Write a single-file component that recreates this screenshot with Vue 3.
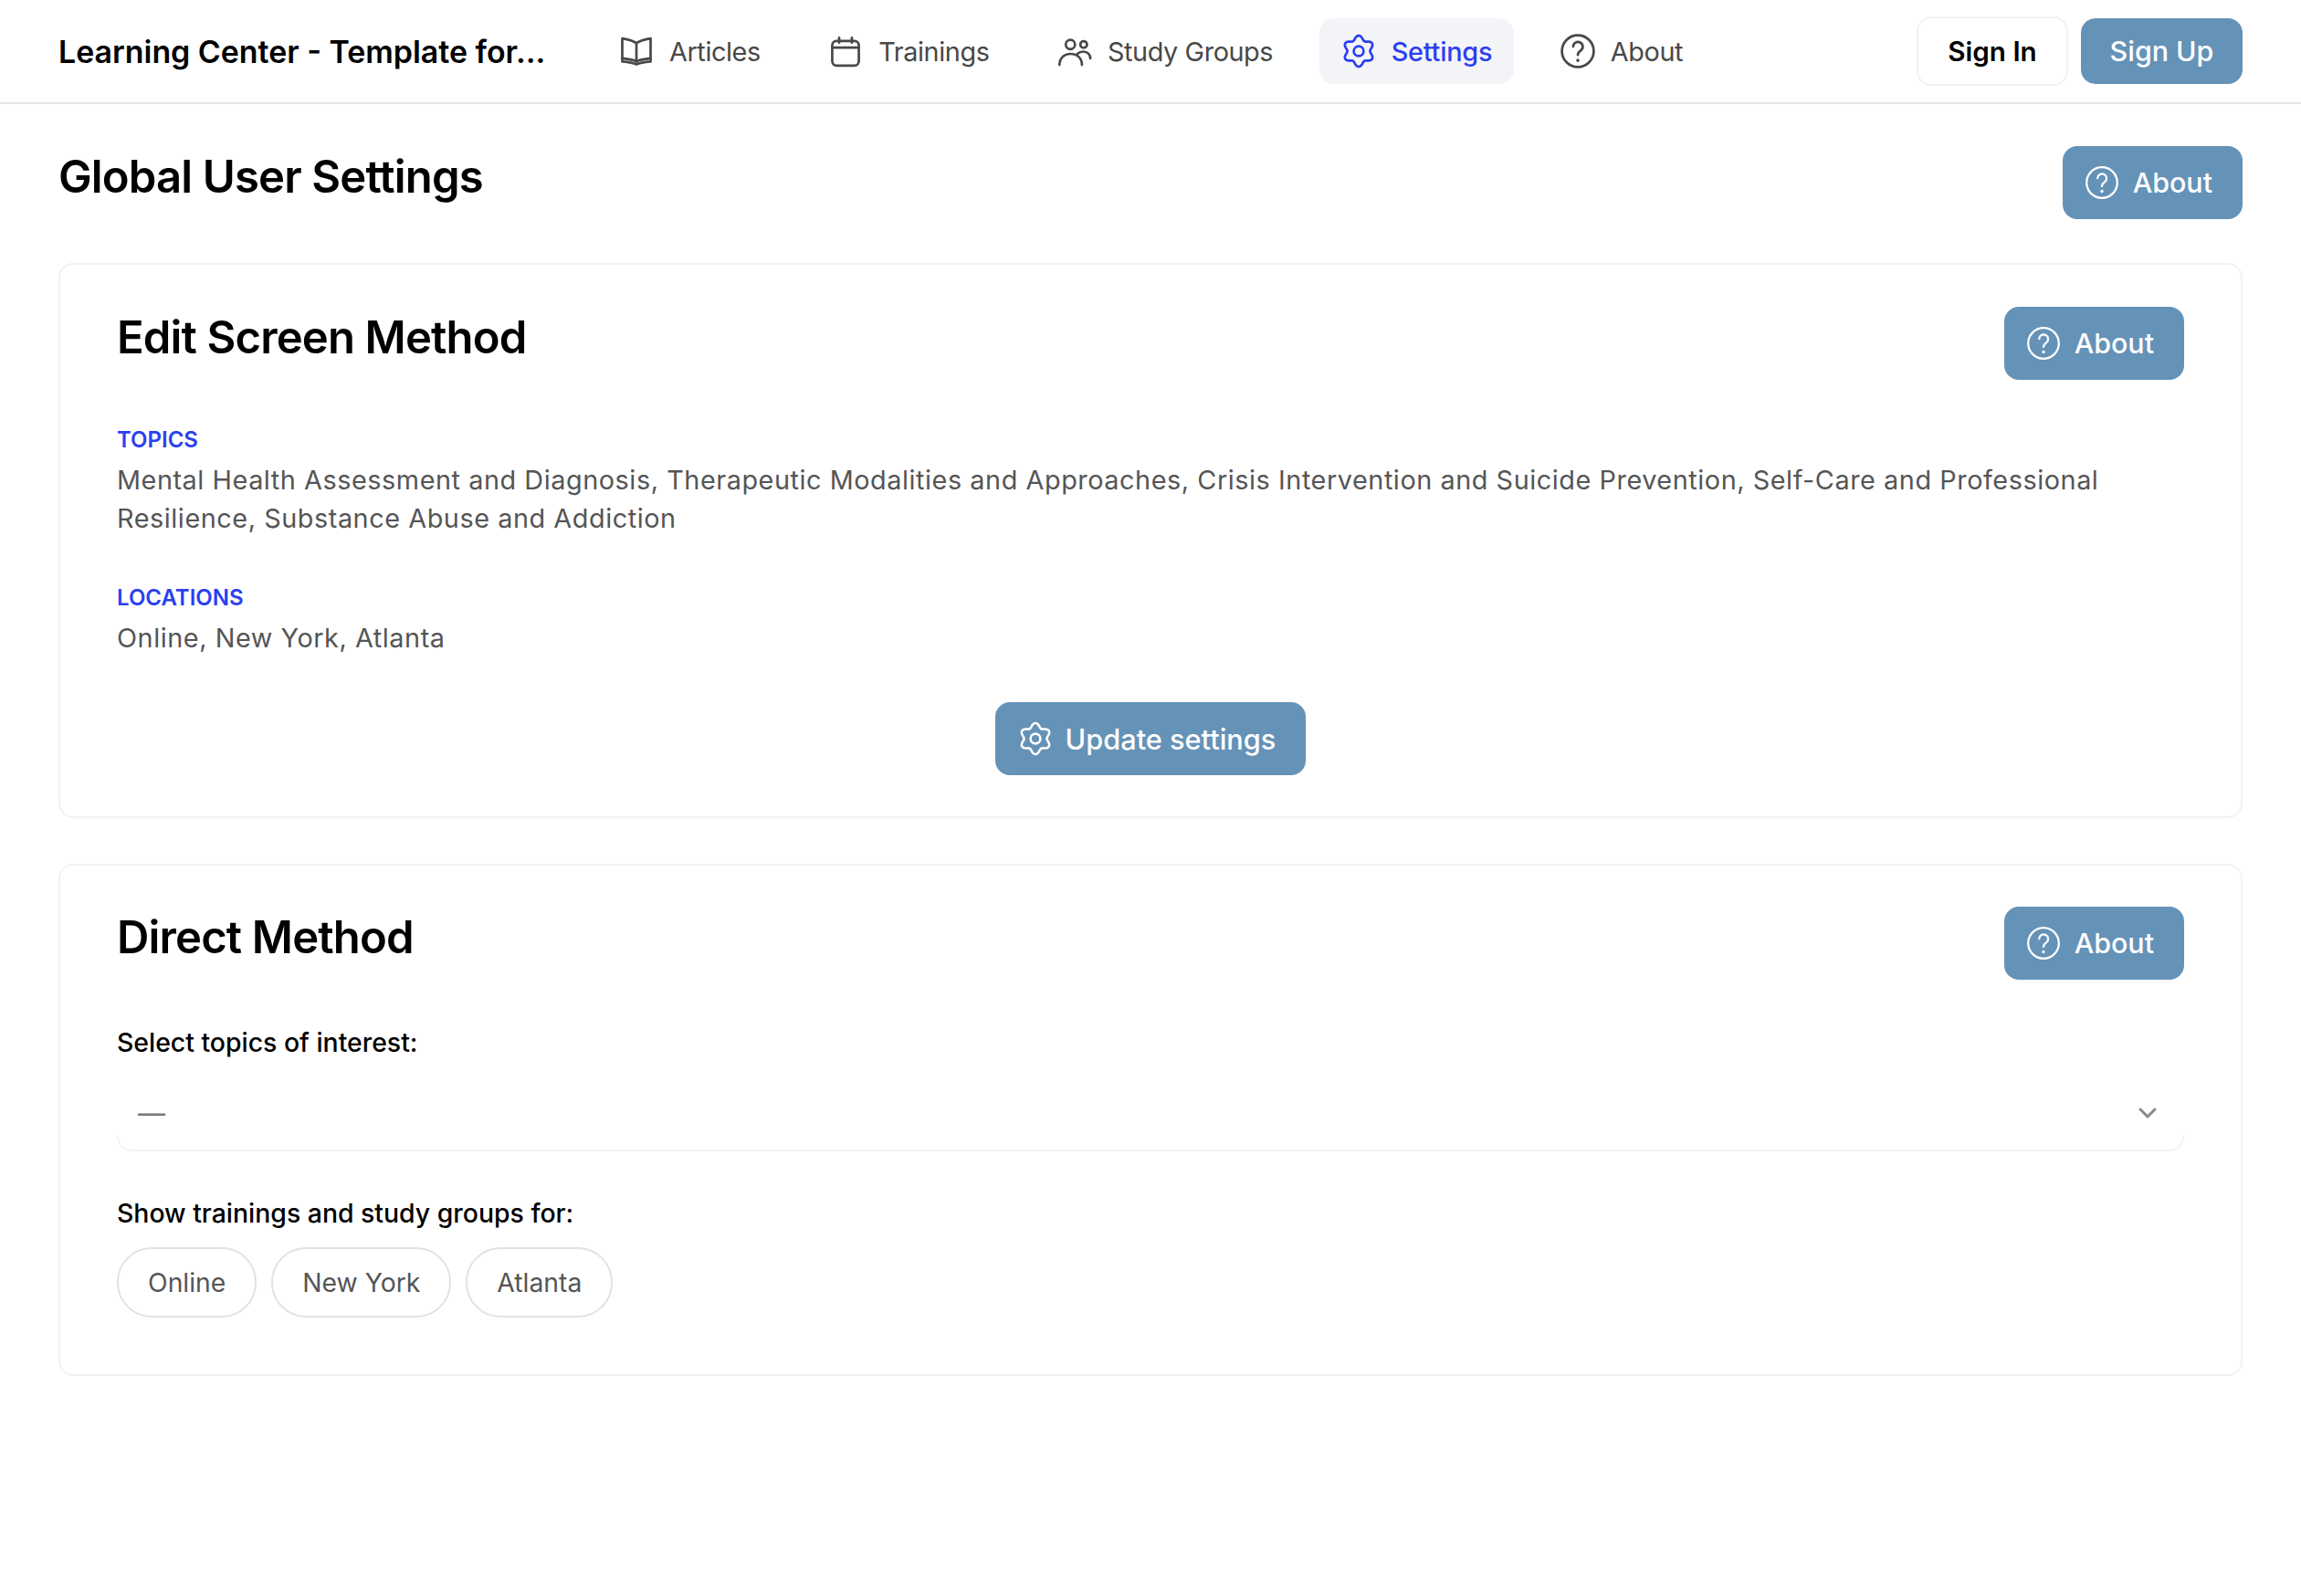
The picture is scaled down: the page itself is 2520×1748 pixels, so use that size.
<script setup>
const navItems = [
  { label: 'Articles', icon: 'book' },
  { label: 'Trainings', icon: 'calendar' },
  { label: 'Study Groups', icon: 'users' },
  { label: 'Settings', icon: 'gear', active: true },
  { label: 'About', icon: 'help' },
]
const chips = ['Online', 'New York', 'Atlanta']

// Six-lobed cog outline, sampled in polar form around the icon's centre.
const gear = (() => {
  const points = []
  for (let i = 0; i < 144; i++) {
    const a = (i / 144) * Math.PI * 2
    const r = 9.3 + 1.45 * Math.cos(6 * a)
    points.push(`${(12 + r * Math.sin(a)).toFixed(2)} ${(12 - r * Math.cos(a)).toFixed(2)}`)
  }
  return `M${points.join('L')}Z`
})()
</script>

<template>
  <div class="page">
    <header class="topbar">
      <div class="brand">Learning Center - Template for...</div>
      <nav class="nav">
        <a v-for="item in navItems" :key="item.label" class="nav-item" :class="{ active: item.active }">
          <svg class="nav-icon" viewBox="0 0 24 24" fill="none" stroke="currentColor" stroke-width="1.7" stroke-linecap="round" stroke-linejoin="round">
            <template v-if="item.icon === 'book'">
              <path d="M12 6.4C10 5 7 4 2.200 3.200V17c4.800.5 7.800 1 9.800 2.200 2-1.200 5-1.700 9.800-2.200V3.200C17 4 14 5 12 6.400Z" />
              <path d="M12 6.400v12.800" />
              <path d="M2.200 17v2.200c4.800.4 7.800 1 9.800 2 2-1 5-1.600 9.800-2V17" />
            </template>
            <template v-else-if="item.icon === 'calendar'">
              <rect x="2.800" y="5" width="18.400" height="17" rx="3" />
              <path d="M2.800 9.600h18.400M7.600 2.800v3.400M16.400 2.800v3.400" />
            </template>
            <template v-else-if="item.icon === 'users'">
              <circle cx="9" cy="7.400" r="3.200" />
              <circle cx="18.200" cy="7.400" r="2.300" />
              <path d="M1.500 21.500C1.500 17 4.500 13.900 9.200 13.900S17 17 17 21.500" />
              <path d="M13.800 13.900C15 12.800 16.500 12.300 18 12.300c2.800 0 4.800 2 4.800 4.700" />
            </template>
            <template v-else-if="item.icon === 'gear'">
              <path :d="gear" />
              <circle cx="12" cy="12" r="3.400" />
            </template>
            <template v-else>
              <circle cx="12" cy="12" r="11" />
              <path d="M8.800 8.800a3.300 3.300 0 1 1 5.200 2.800c-1.200.8-2 1.500-2 3.100" />
              <path d="M12 18.300v.1" stroke-width="2.200" />
            </template>
          </svg>
          <span>{{ item.label }}</span>
        </a>
      </nav>
      <div class="auth">
        <button class="btn-outline">Sign In</button>
        <button class="btn-solid btn-short">Sign Up</button>
      </div>
    </header>

    <main class="content">
      <div class="title-row">
        <h1 class="page-title">Global User Settings</h1>
        <button class="btn-solid btn-icon">
          <svg class="btn-svg" viewBox="0 0 24 24" fill="none" stroke="currentColor" stroke-width="1.500" stroke-linecap="round" stroke-linejoin="round">
            <circle cx="12" cy="12" r="11.200" />
            <path d="M8.800 8.800a3.300 3.300 0 1 1 5.200 2.800c-1.200.8-2 1.500-2 3.100" />
            <path d="M12 18.300v.1" stroke-width="2.200" />
          </svg>
          About
        </button>
      </div>

      <section class="card card-edit">
        <div class="card-head">
          <h2 class="card-title">Edit Screen Method</h2>
          <button class="btn-solid btn-icon">
            <svg class="btn-svg" viewBox="0 0 24 24" fill="none" stroke="currentColor" stroke-width="1.500" stroke-linecap="round" stroke-linejoin="round">
              <circle cx="12" cy="12" r="11.200" />
              <path d="M8.800 8.800a3.300 3.300 0 1 1 5.200 2.800c-1.200.8-2 1.500-2 3.100" />
              <path d="M12 18.300v.1" stroke-width="2.200" />
            </svg>
            About
          </button>
        </div>
        <div class="eyebrow eyebrow-topics">Topics</div>
        <p class="body-text">Mental Health Assessment and Diagnosis, Therapeutic Modalities and Approaches, Crisis Intervention and Suicide Prevention, Self-Care and Professional Resilience, Substance Abuse and Addiction</p>
        <div class="eyebrow eyebrow-locations">Locations</div>
        <p class="body-text">Online, New York, Atlanta</p>
        <div class="center-row">
          <button class="btn-solid btn-icon btn-update">
            <svg class="gear-svg" viewBox="0 0 24 24" fill="none" stroke="currentColor" stroke-width="1.600" stroke-linecap="round" stroke-linejoin="round">
              <path :d="gear" />
              <circle cx="12" cy="12" r="3.400" />
            </svg>
            Update settings
          </button>
        </div>
      </section>

      <section class="card card-direct">
        <div class="card-head">
          <h2 class="card-title">Direct Method</h2>
          <button class="btn-solid btn-icon">
            <svg class="btn-svg" viewBox="0 0 24 24" fill="none" stroke="currentColor" stroke-width="1.500" stroke-linecap="round" stroke-linejoin="round">
              <circle cx="12" cy="12" r="11.200" />
              <path d="M8.800 8.800a3.300 3.300 0 1 1 5.200 2.800c-1.200.8-2 1.500-2 3.100" />
              <path d="M12 18.300v.1" stroke-width="2.200" />
            </svg>
            About
          </button>
        </div>
        <label class="field-label label-topics">Select topics of interest:</label>
        <div class="select">
          <span class="select-value">—</span>
          <svg class="chevron" viewBox="0 0 20 12" fill="none" stroke="currentColor" stroke-width="3" stroke-linecap="round" stroke-linejoin="round">
            <path d="M2 2l8 8 8-8" />
          </svg>
        </div>
        <label class="field-label label-show">Show trainings and study groups for:</label>
        <div class="chips">
          <span v-for="chip in chips" :key="chip" class="chip">{{ chip }}</span>
        </div>
      </section>
    </main>
  </div>
</template>

<style>
html, body { margin: 0; background: #fff; }
</style>

<style scoped>
.page {
  min-height: 1748px;
  font-family: Inter, "Liberation Sans", sans-serif;
  color: #000;
  background: #fff;
}
.topbar {
  display: flex;
  align-items: center;
  height: 112px;
  padding: 0 64px;
  border-bottom: 2px solid #e3e4e8;
}
.brand {
  width: 532px;
  font-size: 33.9px;
  font-weight: 600;
  white-space: nowrap;
  flex: none;
}
.nav {
  display: flex;
  gap: 26.5px;
  margin-left: 58px;
  flex: 1;
}
.nav-item {
  display: flex;
  align-items: center;
  gap: 17px;
  height: 72px;
  padding: 0 24px;
  border-radius: 16px;
  font-size: 28.8px;
  letter-spacing: -0.4px;
  color: #484848;
  white-space: nowrap;
}
.nav-item.active {
  background: #f3f4f8;
  color: #2b3ff0;
  font-weight: 500;
  letter-spacing: -0.2px;
}
.nav-icon { width: 38px; height: 38px; flex: none; }
.auth { display: flex; align-items: center; gap: 14px; }
button {
  font-family: inherit;
  cursor: pointer;
}
.btn-outline {
  width: 166px;
  height: 76px;
  background: #fff;
  border: 2px solid #f2f2f4;
  border-radius: 16px;
  font-size: 29.6px;
  font-weight: 600;
  color: #000;
}
.btn-solid {
  background: #6592b7;
  color: #fff;
  border: 0;
  border-radius: 16px;
  font-weight: 500;
  font-size: 30.4px;
}
.btn-short {
  width: 177px;
  height: 72px;
}
.btn-icon {
  display: inline-flex;
  align-items: center;
  gap: 16px;
  height: 80px;
  padding: 0 33px 0 25px;
  white-space: nowrap;
}
.btn-update { padding: 0 33px 0 25px; gap: 14px; font-size: 30.7px; }
.btn-svg { width: 36px; height: 36px; flex: none; }
.gear-svg { width: 38px; height: 38px; flex: none; }
.content { padding: 46px 64px 0; }
.title-row {
  display: flex;
  justify-content: space-between;
  align-items: flex-start;
}
.page-title {
  margin: 0;
  padding-top: 4px;
  font-size: 49px;
  letter-spacing: -0.85px;
  font-weight: 600;
  line-height: 60px;
}
.card {
  border: 2px solid #f2f2f4;
  border-radius: 16px;
  padding: 46px 62px;
  box-sizing: border-box;
}
.card-edit { margin-top: 48px; height: 608px; }
.card-direct { margin-top: 50px; height: 561px; padding-top: 45px; }
.card-head {
  display: flex;
  justify-content: space-between;
  align-items: flex-start;
}
.card-title {
  margin: 0;
  padding-top: 4px;
  font-size: 49px;
  letter-spacing: -0.85px;
  font-weight: 600;
  line-height: 60px;
}
.eyebrow {
  font-size: 24px;
  font-weight: 600;
  line-height: 30px;
  text-transform: uppercase;
  color: #2b3ff0;
}
.eyebrow-topics { margin-top: 51px; }
.eyebrow-locations { margin-top: 51px; }
.body-text {
  margin: 8px 0 0;
  font-size: 28.8px;
  letter-spacing: 0.56px;
  line-height: 42px;
  color: #555;
}
.center-row {
  display: flex;
  justify-content: center;
  margin-top: 49px;
}
.field-label {
  display: block;
  font-size: 28.4px;
  font-weight: 500;
  line-height: 38px;
}
.label-topics { margin-top: 50px; }
.label-show { margin-top: 49px; }
.select {
  position: relative;
  display: flex;
  align-items: center;
  justify-content: space-between;
  box-sizing: border-box;
  height: 82px;
  margin-top: 18px;
  padding: 0 30px 3px 23px;
  color: #777;
  font-size: 30px;
}
.select::after {
  content: "";
  position: absolute;
  left: 0;
  right: 0;
  bottom: 0;
  height: 18px;
  box-sizing: border-box;
  border: 2px solid #f4f4f6;
  border-top: 0;
  border-radius: 0 0 16px 16px;
}
.chevron { width: 20px; height: 12px; color: #888; }
.chips { display: flex; gap: 16px; margin-top: 18px; }
.chip {
  display: flex;
  align-items: center;
  height: 77px;
  box-sizing: border-box;
  padding: 0 32px;
  border: 2px solid #e2e2e4;
  border-radius: 38px;
  font-size: 28.3px;
  color: #555;
}
</style>
